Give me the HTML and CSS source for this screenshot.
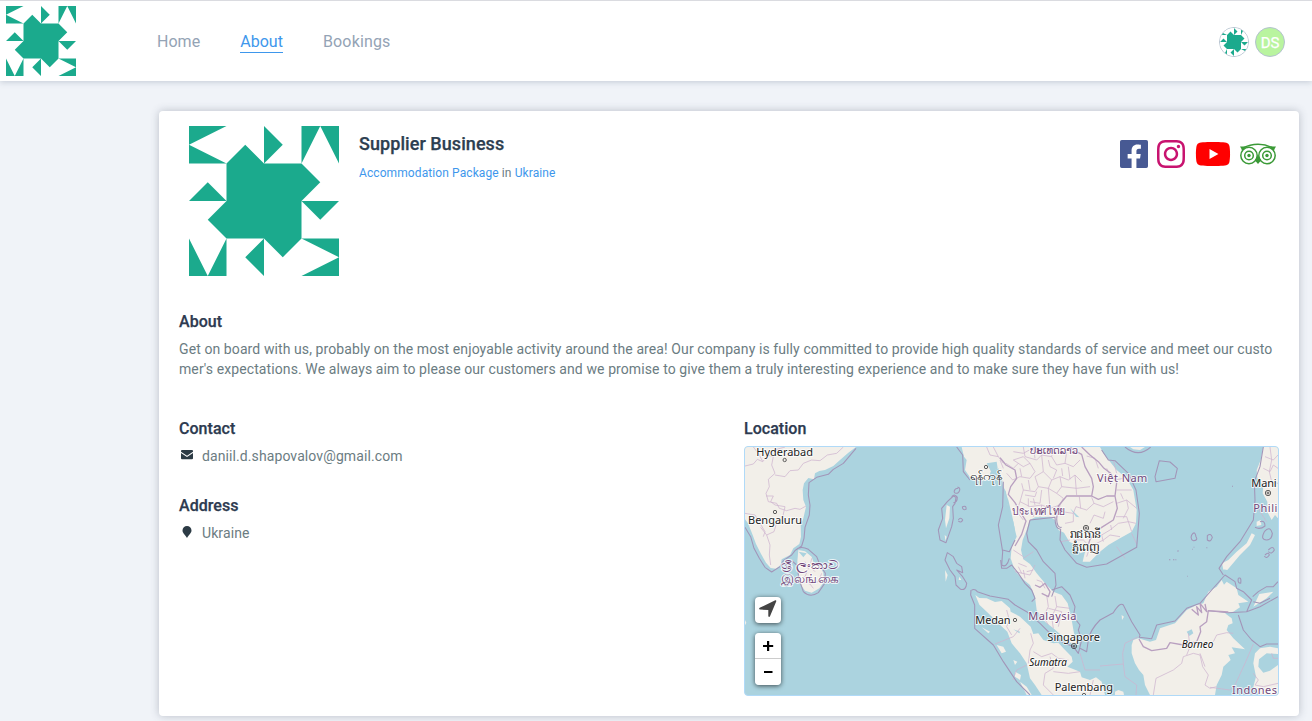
FILE: index.html
```html
<!DOCTYPE html>
<html lang="en">
<head>
<meta charset="utf-8">
<title>Supplier Business</title>
<link rel="stylesheet" href="styles.css">
</head>
<body>
<svg class="defs" width="0" height="0">
  <symbol id="logo" viewBox="0 0 8 8">
    <path d="M0 0H2L0 1zM0 1L2 2H0zM4 0L5 1L4 2zM6 0H7L6 2zM7 0H8V2zM0 4L1 3L2 4zM2 2L3 1L4 2H6L7 3L6 4V6L5 7L4 6H2L1 5L2 4zM6 4H8L7 5zM0 6L1 8H0zM2 6V8H1zM4 6V8L3 7zM6 6H8V7zM8 7V8H6z"/>
  </symbol>
</svg>
<header class="topbar">
  <svg class="brand"><use href="#logo"/></svg>
  <nav class="nav">
    <a>Home</a><a class="active">About</a><a class="wide">Bookings</a>
  </nav>
  <div class="avatars">
    <span class="avatar"><svg><use href="#logo"/></svg></span>
    <span class="avatar initials">DS</span>
  </div>
</header>
<main class="card">
  <section class="profile">
    <svg class="photo"><use href="#logo"/></svg>
    <div class="title">
      <h1>Supplier Business</h1>
      <p><a>Accommodation Package</a> in <a>Ukraine</a></p>
    </div>
    <div class="social">
      <svg class="fb" viewBox="0 0 448 512"><path d="M420 32H28A28 28 0 0 0 0 60v392a28 28 0 0 0 28 28h157.250V327.690h-63V256h63v-54.640c0-62.150 37-96.480 93.670-96.480 27.140 0 55.520 4.840 55.520 4.840v61h-31.270c-30.810 0-40.420 19.120-40.420 38.730V256h68.780l-11 71.690h-57.780V480H420a28 28 0 0 0 28-28V60a28 28 0 0 0-28-28z"/></svg>
      <svg class="ig" viewBox="0 0 448 512"><path d="M224.100 141c-63.600 0-114.900 51.300-114.900 114.900s51.300 114.900 114.900 114.900S339 319.500 339 255.900 287.700 141 224.100 141zm0 189.600c-41.100 0-74.700-33.500-74.700-74.700s33.500-74.700 74.700-74.700 74.700 33.500 74.700 74.700-33.600 74.700-74.700 74.700zm146.400-194.300c0 14.900-12 26.800-26.800 26.800-14.900 0-26.800-12-26.800-26.800s12-26.800 26.800-26.800 26.800 12 26.800 26.800zm76.100 27.200c-1.700-35.900-9.900-67.700-36.200-93.900-26.200-26.200-58-34.400-93.900-36.200-37-2.100-147.900-2.100-184.900 0-35.800 1.700-67.600 9.900-93.900 36.100s-34.400 58-36.200 93.900c-2.100 37-2.100 147.900 0 184.900 1.700 35.900 9.900 67.700 36.200 93.900s58 34.400 93.900 36.200c37 2.100 147.900 2.100 184.900 0 35.900-1.700 67.700-9.900 93.900-36.200 26.200-26.200 34.400-58 36.200-93.900 2.100-37 2.100-147.800 0-184.800zM398.800 388c-7.800 19.600-22.900 34.700-42.600 42.600-29.500 11.700-99.500 9-132.100 9s-102.700 2.600-132.100-9c-19.600-7.800-34.700-22.900-42.600-42.600-11.700-29.500-9-99.500-9-132.100s-2.600-102.700 9-132.100c7.800-19.600 22.900-34.700 42.600-42.600 29.500-11.700 99.500-9 132.100-9s102.700-2.600 132.100 9c19.600 7.800 34.700 22.900 42.600 42.600 11.700 29.500 9 99.500 9 132.100s2.700 102.700-9 132.100z"/></svg>
      <svg class="yt" viewBox="0 0 576 512"><path d="M549.655 124.083c-6.281-23.650-24.787-42.276-48.284-48.597C458.781 64 288 64 288 64S117.220 64 74.629 75.486c-23.497 6.322-42.003 24.947-48.284 48.597-11.412 42.867-11.412 132.305-11.412 132.305s0 89.438 11.412 132.305c6.281 23.650 24.787 41.500 48.284 47.821C117.220 448 288 448 288 448s170.780 0 213.371-11.486c23.497-6.321 42.003-24.171 48.284-47.821 11.412-42.867 11.412-132.305 11.412-132.305s0-89.438-11.412-132.305zm-317.510 213.508V175.185l142.739 81.205-142.739 81.201z"/></svg>
      <svg class="ta" viewBox="0 0 36 32">
        <g fill="none" stroke="currentColor" stroke-width="1.500"><circle cx="9" cy="17.500" r="8.200"/><circle cx="27" cy="17.500" r="8.200"/><circle cx="9" cy="17.500" r="4.300"/><circle cx="27" cy="17.500" r="4.300"/><path d="M3 10Q10 6.200 18 6.200T33 10"/></g>
        <path fill="currentColor" d="M0 8.500H6.500L2 13Q1.500 10.500 0 8.500zM36 8.500H29.500L34 13Q34.500 10.500 36 8.500zM15 22.500L18 26L21 22.500L18 17z"/>
        <circle cx="9" cy="17.500" r="1.700" fill="currentColor"/><circle cx="27" cy="17.500" r="1.700" fill="currentColor"/>
      </svg>
    </div>
  </section>
  <section class="about">
    <h2>About</h2>
    <p>Get on board with us, probably on the most enjoyable activity around the area! Our company is fully committed to provide high quality standards of service and meet our customer's expectations. We always aim to please our customers and we promise to give them a truly interesting experience and to make sure they have fun with us!</p>
  </section>
  <div class="columns">
    <div class="details">
      <section>
        <h2>Contact</h2>
        <p class="line"><svg class="mail" viewBox="0 0 12 10"><path d="M1 0H11Q12 0 12 1V1.800L6 5.700L0 1.800V1Q0 0 1 0zM0 3L6 7L12 3V8.300Q12 9.300 11 9.300H1Q0 9.300 0 8.300z"/></svg>daniil.d.shapovalov@gmail.com</p>
      </section>
      <section>
        <h2>Address</h2>
        <p class="line"><svg class="pin" viewBox="0 0 12 12"><path d="M6 0A4.500 4.500 0 0 1 10.500 4.500C10.500 7 8 8.500 6 12C4 8.500 1.500 7 1.500 4.500A4.500 4.500 0 0 1 6 0z"/></svg>Ukraine</p>
      </section>
    </div>
    <section class="location">
      <h2>Location</h2>
      <div class="map">
        <svg class="tiles" viewBox="15 21 1599 744">
          <g class="land">
            <path d="M15 21H348L325 38L300 60L280 78L255 90L238 93L225 100L222 118L205 114L192 130L188 150L190 180L198 200L190 235L182 255L183 290L178 312L160 325L150 345L125 358L122 375L108 386L92 384L78 368L62 340L48 312L38 285L24 250L15 238z"/>
            <path d="M175 330L195 334L215 350L220 365L238 375L250 398L252 425L238 445L215 458L195 452L183 435L176 400L172 365z"/>
            <path d="M665 21L672 50L680 60L675 90L690 112L715 122L745 120L752 95L775 85L785 110L790 140L798 155L802 190L810 220L820 245L825 270L830 290L815 320L812 355L825 392L840 410L870 435L885 470L890 510L915 545L940 565L975 595L1000 615L1012 610L1002 580L995 540L983 490L965 465L940 455L915 430L890 400L870 372L850 358L843 330L848 300L860 270L870 240L885 232L930 230L945 240L955 270L972 278L988 305L1008 315L1020 340L1035 335L1028 365L1050 365L1070 345L1080 335L1105 315L1140 295L1175 275L1188 250L1190 210L1180 150L1160 115L1130 90L1110 65L1090 40L1080 21z"/>
            <path d="M706 465L718 474L740 475L765 486L785 483L810 505L812 515L840 530L872 560L880 582L895 580L910 600L940 610L955 608L970 625L995 650L998 665L982 680L1020 695L1025 712L1050 720L1068 712L1085 725L1095 765H905L885 735L870 715L860 670L840 640L815 610L802 575L775 550L745 520L718 494z"/>
            <path d="M1175 615L1180 600L1195 595L1230 605L1248 600L1260 565L1305 550L1340 510L1370 495L1390 490L1405 455L1430 440L1445 420L1452 434L1460 425L1490 445L1495 465L1525 485L1495 490L1500 502L1480 515L1455 520L1475 535L1478 550L1465 555L1460 570L1480 595L1515 628L1475 622L1485 640L1465 645L1472 660L1450 680L1445 705L1430 735L1425 765H1230L1215 735L1210 705L1197 690L1185 670L1175 640z"/>
            <path d="M1540 670L1545 640L1560 625L1590 620L1614 625V642L1580 640L1557 658L1555 680L1570 698L1590 692L1614 675V765H1560L1540 740L1548 710z"/>
            <path d="M1570 21L1562 60L1550 90L1552 115L1570 135L1568 160L1582 185L1582 215L1595 240L1605 225L1614 235V21zM1450 388L1465 360L1490 335L1520 310L1535 280L1545 285L1530 315L1500 345L1462 390zM1550 245L1562 240L1564 255L1550 258zM1450 390L1446 370L1465 360zM1558 462L1600 455L1580 475L1540 500z"/>
            <path d="M725 562L750 575L745 580zM770 615L790 620L798 635L785 640zM820 660L832 665L825 675zM825 695L843 705L840 720L825 710zM840 725L860 740L875 765H860zM620 195L630 200L628 235L618 265L615 240zM614 285L620 290L616 302zM615 390L623 405L617 425zM658 410L664 420L656 420zM1145 525L1152 530L1146 540zM1125 755L1135 750L1150 755L1152 765H1125zM15 540L19 548L15 556zM1170 21H1215L1200 30L1180 28z"/>
          </g>
          <g class="shallow">
            <path d="M794 150L805 180L817 230L825 270L808 310L802 270L808 230zM740 70L770 65L773 85L755 98zM990 205L1018 232L1008 230zM820 568L840 575L838 580zM1340 575L1355 568L1360 580L1348 588zM176 335L200 340L190 352zM845 340L860 310L875 330L885 380L870 365z"/>
          </g>
          <g class="minor">
            <path d="M15 78L40 72L52 58L68 65L85 45L98 50L110 28L135 21M100 50L95 75L105 100L85 118L88 140L78 160L85 185L110 190L118 205L140 212L165 205L180 208L198 198M105 105L135 110L150 92L175 90L190 70L215 60L240 62L262 45L290 40L310 21M78 168L100 168L92 185L105 195L135 200L130 222L128 240L110 248L102 275L80 285L62 262M80 285L90 315L88 345L92 375M15 220L45 225L60 250L75 275L70 290M40 21L55 40L68 64M195 365L205 385L195 410L210 430L235 425L245 400M215 355L210 380L225 395M186 425L210 432L220 445"/>
            <path d="M740 21L750 45L775 50L790 70M760 21L775 50M780 60L790 85M820 60L850 80L870 70L885 95L870 115L840 110L818 120L800 100M850 21L855 50L890 60L905 45L935 50L950 75L975 70L1000 80L1020 60M905 45L910 95L885 110L895 140L925 145L935 120L960 110L985 120L1005 105L1025 125M935 120L910 95M845 130L850 150L840 185L870 200L905 195L930 205L960 195L970 175L950 160L925 145M850 150L885 155L895 140M840 185L830 215L850 240M880 230L885 205M905 195L900 230M960 195L955 220M925 145L930 205M960 110L965 140L950 160M1005 105L1010 165M965 140L1010 145L1050 140M870 70L850 50L820 60M935 50L940 21M975 70L980 35M820 330L850 350M835 370L860 380M860 395L880 390M825 395L870 405L885 375M965 215L1000 220L1008 200L1040 210L1062 190L1090 200L1120 185M1000 220L1000 245L975 250M1018 170L1022 205M1062 190L1055 172M1050 250L1062 225L1090 235L1095 215M1040 350L1050 320L1030 300L1000 300M1050 320L1090 300L1110 285L1140 290M1062 280L1085 285L1110 270L1135 250M1085 285L1090 305M1125 120L1150 115M1130 150L1175 150M1130 190L1160 180L1190 205M1128 230L1160 230L1175 275M1160 180L1165 205L1150 235M1135 250L1165 245L1188 250"/>
            <path d="M798 70L820 85L835 70M840 85L845 110M820 35L850 40L868 30M880 21L885 55M925 60L930 80L950 90L940 115M965 85L968 108M985 80L990 118M865 120L870 150M905 150L900 190L870 185M855 165L885 170L890 155M865 175V200M880 175L885 195M1085 105L1100 125L1130 118M1040 48L1065 55L1075 85M1100 85L1110 105M1142 160L1150 178M1112 255L1115 270M890 420L905 425L915 445M835 380L845 400M850 390L855 415"/>
            <path d="M920 465L925 500L910 530L925 555M945 468L950 500L935 530L940 565M950 500L990 505M925 505L965 515L955 560M800 510L808 540L800 560L815 585M872 580L880 610L870 630L865 670M880 635L905 650L935 640L955 655L985 660M930 650L940 685L915 700L910 735L940 765M940 695L985 700L1020 695M1060 720L1050 765"/>
            <path d="M1240 765L1248 715L1300 690L1325 670L1330 650L1360 640L1380 645L1388 680L1405 705L1395 735L1410 745L1430 740M1345 580L1350 620L1340 645M1420 605L1430 585L1460 578L1480 580M1380 640L1395 680M1540 700L1555 720L1545 735L1570 740L1614 730M1595 640L1600 655L1614 655M1575 50L1600 60L1614 45M1570 85L1590 95L1600 75L1614 85M1590 21L1595 60L1588 95L1595 125L1614 130M1575 130L1600 125"/>
            <path d="M1080 678L1150 672L1148 640L1155 610L1195 590M1150 672L1155 710L1190 735L1188 765M765 612L820 590L840 565M860 675L830 690L818 720M1540 612L1515 670L1485 735L1470 750L1410 742M1020 640L1035 690L1080 690M1130 320L1155 355M1175 280L1190 312M962 305L990 300M1120 60L1130 100M1550 200L1580 245M850 355L880 335"/>
          </g>
          <g class="sea">
            <path d="M348 25L310 70L280 88L265 103L230 112L207 128L205 165L210 195L208 225L195 262L192 295L185 318L165 332L155 345L130 362L120 380L95 396L75 382L58 355L42 325L32 290L15 262M165 332Q180 315 205 328L230 350L240 375L256 400L254 430L235 458Q210 475 190 455L178 420L170 375L155 362"/>
            <path d="M650 21L668 45L670 95L690 120M790 125L788 200L775 255L788 335L785 375Q800 385 808 355M788 330L808 335L825 300M870 240L860 280L865 305L890 330L910 365L945 400L948 435L935 470M870 240L945 232Q945 268 962 268L960 300L975 330L1010 370L1040 382L1100 372L1190 322L1198 220L1188 150L1165 100L1125 62L1105 60L1085 30M950 235Q950 265 965 262M1155 21Q1195 55 1232 21"/>
            <path d="M655 145C640 145 640 160 648 160C660 160 664 140 652 142M640 168L648 172L645 190L638 200L640 235L635 260L618 308L600 300L595 270L608 235L605 205L622 185zM635 170Q645 160 652 172Q652 188 640 188M667 200Q680 195 678 208Q668 212 667 200M655 240Q662 230 668 240Q664 250 655 243M622 338L640 350L650 370L665 380L668 398L650 390L668 410L680 430Q678 452 662 448L648 435L645 410L630 390L615 360zM782 360L785 385L800 385L815 375L835 400L855 430L875 450L885 475L875 485M695 450Q705 445 712 455L750 468L805 478L825 495L860 515L900 550L940 590L965 605L1000 620L1015 640L1025 600L1015 570L1020 555L1000 530L1005 500L990 465L965 440L935 450M693 450L692 465L704 495V565L760 615L790 665L830 725L870 765M1020 625L1040 635L1045 600Q1050 570 1080 540L1120 518Q1140 485 1150 495L1175 545L1200 585L1198 592L1235 596L1250 555L1305 543L1340 505L1380 490L1415 450L1455 405L1485 425L1490 445L1510 455L1535 480L1520 515L1465 518L1405 512M1495 525L1510 570L1535 600L1560 620L1580 612L1614 612M1520 515L1560 500L1614 470M1538 470L1555 455L1580 440L1600 440L1614 425M1540 485L1560 490L1590 475"/>
            <path d="M1258 62L1290 66L1312 85L1305 115L1248 125L1245 110zM1570 21L1560 80L1543 125L1545 180L1540 240L1500 305L1460 350L1437 385L1450 405M1560 245Q1575 240 1575 258Q1560 270 1545 262M1573 275Q1590 255 1597 280Q1595 300 1580 300Q1560 300 1573 275M1355 285Q1365 270 1368 290Q1375 302 1360 302Q1350 298 1355 285M1402 287Q1412 278 1417 292Q1412 308 1402 300zM1575 345Q1585 335 1588 345Q1580 358 1573 348M1585 330Q1600 315 1603 330Q1595 345 1585 335M1495 415Q1505 410 1502 430Q1492 430 1495 415"/>
            <path class="country" d="M780 53L798 75L825 90L830 115L812 140L805 163L825 188L842 218L858 243L845 283L825 318M950 235L955 198L980 168L1055 168L1060 140L1055 115L1035 80L1025 43L1000 30L990 21M1055 168L1075 178L1100 168L1125 168M1025 21L1050 45L1075 65L1092 85L1112 100L1130 128L1125 168L1132 205L1120 240L1085 262L1070 272L1050 298L1040 330M885 435L900 442L915 430L930 455L925 470L905 460M1197 597L1210 620L1235 632L1280 625L1290 608L1330 615L1370 605L1382 575L1380 560L1400 545L1405 512L1465 516M1355 508L1375 525L1370 500L1385 518L1380 490L1400 515L1395 492"/>
            <path d="M1476 139h3M1312 334l4-2M1287 359h4M1299 359h4M1306 359h3M1399 323h3M1356 328h2M1361 322h2M1342 409h2"/>
          </g>
          <g class="places">
            <circle cx="134" cy="60" r="5"/><circle cx="105" cy="216" r="5"/><circle cx="738" cy="81" r="5"/><circle cx="825" cy="540" r="5"/><circle cx="1032" cy="765" r="5"/>
            <circle cx="1038" cy="264" r="8"/><circle cx="1038" cy="264" r="3"/><circle cx="1002" cy="618" r="8"/><circle cx="1002" cy="618" r="3"/><circle cx="1584" cy="159" r="8"/><circle cx="1584" cy="159" r="3"/>
          </g>
          <g class="city">
            <text x="49" y="49" textLength="170">Hyderabad</text>
            <text x="24" y="253" textLength="162">Bengaluru</text>
            <text x="690" y="120" textLength="97" lengthAdjust="spacingAndGlyphs">ရန်ကုန်</text>
            <text x="990" y="293" textLength="94" lengthAdjust="spacingAndGlyphs">រាជធានី</text>
            <text x="995" y="334" textLength="84" lengthAdjust="spacingAndGlyphs">ភ្នំពេញ</text>
            <text x="706" y="553" textLength="106">Medan</text>
            <text x="922" y="602" textLength="158">Singapore</text>
            <text x="944" y="752" textLength="175">Palembang</text>
            <text x="1534" y="141" textLength="76">Mani</text>
          </g>
          <g class="nation">
            <text x="124" y="388" textLength="172" lengthAdjust="spacingAndGlyphs">ශ්‍රී ලංකාව</text>
            <text class="tall" x="122" y="430" textLength="176" lengthAdjust="spacingAndGlyphs">இலங்கை</text>
            <text x="870" y="41" textLength="144" lengthAdjust="spacingAndGlyphs">ປະເທດລາວ</text>
            <text x="817" y="225" textLength="157" lengthAdjust="spacingAndGlyphs">ประเทศไทย</text>
            <text x="1071" y="127" textLength="151">Việt Nam</text>
            <text x="865" y="541" textLength="144">Malaysia</text>
            <text x="1476" y="761" textLength="135">Indones</text>
            <text x="1540" y="216" textLength="72">Phili</text>
          </g>
          <g class="island">
            <text x="868" y="679" textLength="113" lengthAdjust="spacingAndGlyphs">Sumatra</text>
            <text x="1325" y="624" textLength="95" lengthAdjust="spacingAndGlyphs">Borneo</text>
          </g>
        </svg>
        <div class="controls">
          <button class="ctl"><svg viewBox="0 0 18 18"><path d="M16.300 .3Q17.600 0 17.200 1.500L11 16.200Q10.200 17.600 9.300 16.300V10L1 9.600Q-.6 9 .7 7.800Z"/></svg></button>
          <div class="zoom"><button class="ctl"><svg viewBox="0 0 18 18"><path d="M8 4h2.200v4h4v2h-4v4H8v-4H4v-2h4z"/></svg></button><button class="ctl"><svg viewBox="0 0 18 18"><path d="M5 8h8.500v2H5z"/></svg></button></div>
        </div>
      </div>
    </section>
  </div>
</main>
</body>
</html>
```
FILE: styles.css
```css
* { box-sizing: border-box; }
body { margin: 0; height: 721px; overflow: hidden; background: #f0f3f8; color: #6b7c82; font: 14px/20px Roboto, "Liberation Sans", sans-serif; letter-spacing: .096px; }
h1, h2, p { margin: 0; }
.defs { display: block; }
.topbar { height: 81px; border-top: 1px solid #dadbe0; background: #fff; box-shadow: 0 1px 6px rgba(60, 80, 110, .25); display: flex; align-items: center; padding: 0 27px 0 6px; }
.brand, .photo, .avatar svg { fill: #1baa8d; background: #fff; }
.brand { width: 70px; height: 70px; }
.nav { display: flex; gap: 40px; margin-left: 81px; flex: 1; font-size: 16px; line-height: 21px; letter-spacing: .03px; color: #94a3b5; }
.nav a { border-bottom: 1px solid transparent; padding-top: 1px; }
.nav .active { color: #3e97ec; border-color: #3e97ec; }
.nav .wide { letter-spacing: .16px; }
.avatars { display: flex; gap: 6px; padding-top: 2px; }
.avatar { width: 30px; height: 30px; border: 1px solid #b4c2cf; border-radius: 50%; overflow: hidden; display: flex; align-items: center; justify-content: center; }
.avatar svg { width: 28px; height: 28px; }
.initials { background: #b9f49f; color: #fff; font-size: 15px; letter-spacing: 0; padding-top: 1px; -webkit-text-stroke: .25px; }
.card { width: 1140px; height: 605px; margin: 30px 0 0 159px; padding: 15px 20px; background: #fff; border-radius: 4px; box-shadow: 0 0 9px rgba(60, 70, 90, .3); }
.profile { display: flex; padding-left: 10px; }
.photo { width: 150px; height: 150px; }
.title { flex: 1; padding: 8px 0 0 20px; }
h1 { font-size: 18px; line-height: 20px; font-weight: 500; color: #2d3e50; letter-spacing: .06px; -webkit-text-stroke: .25px; }
.title p { margin-top: 9px; font-size: 12px; }
.title a { color: #3e97ec; }
.social { display: flex; gap: 9px; margin-top: 12px; height: 32px; padding-right: 3px; }
.social svg { height: 32px; width: 28px; }
.social .fb { fill: #475993; }
.social .ig { fill: #c8136f; margin-right: 1px; }
.social .yt { fill: #f00; width: 36px; }
.social .ta { color: #3b9a37; width: 36px; }
h2 { font-size: 16px; line-height: 20px; font-weight: 500; color: #2d3a50; letter-spacing: .04px; -webkit-text-stroke: .25px; }
.about { margin-top: 36px; }
.about p { margin-top: 7px; word-break: break-all; }
.columns { display: grid; grid-template-columns: 565px 535px; margin-top: 40px; }
.details { display: flex; flex-direction: column; gap: 30px; }
.line { display: flex; align-items: center; gap: 9px; margin-top: 7px; }
.line svg { width: 12px; height: 12px; margin: -3px 0 0 2px; fill: #2c3b45; }
.map { position: relative; height: 250px; margin-top: 7px; border: 1px solid #b0daf8; border-radius: 4px; overflow: hidden; background: #abd3df; }
.tiles { display: block; width: 533px; height: 248px; letter-spacing: 0; }
.land { fill: #f2efe9; }
.shallow { fill: #abd3df; }
.minor { fill: none; stroke: #cdb4cf; stroke-width: 2.2; }
.sea { fill: none; stroke: #a295b8; stroke-width: 3.2; stroke-linejoin: round; }
.sea .country { stroke: #b9a0c0; stroke-width: 4; }
.places { fill: none; stroke: #444; stroke-width: 2.5; }
.city, .nation, .island { font: 33px "Noto Sans", "DejaVu Sans", sans-serif; fill: #222; stroke: rgba(255, 255, 255, .75); stroke-width: 6; paint-order: stroke; stroke-linejoin: round; }
.nation { fill: #71477a; }
.tall { font-size: 37px; }
.island { font-size: 30px; font-style: italic; fill: #111; }
.controls { position: absolute; left: 10px; bottom: 10px; display: flex; flex-direction: column; gap: 10px; }
.ctl { display: flex; width: 26px; height: 26px; padding: 4px; border: 0; border-radius: 4px; background: #fff; }
.ctl svg { width: 18px; height: 18px; }
.controls > .ctl, .zoom { border-radius: 4px; box-shadow: 0 1px 5px rgba(0, 0, 0, .65); }
.controls > .ctl { fill: #444; padding: 3px 4px 5px; }
.zoom { overflow: hidden; }
.zoom .ctl { border-radius: 0; }
.zoom .ctl:first-child { border-bottom: 1px solid #ccc; }
```
